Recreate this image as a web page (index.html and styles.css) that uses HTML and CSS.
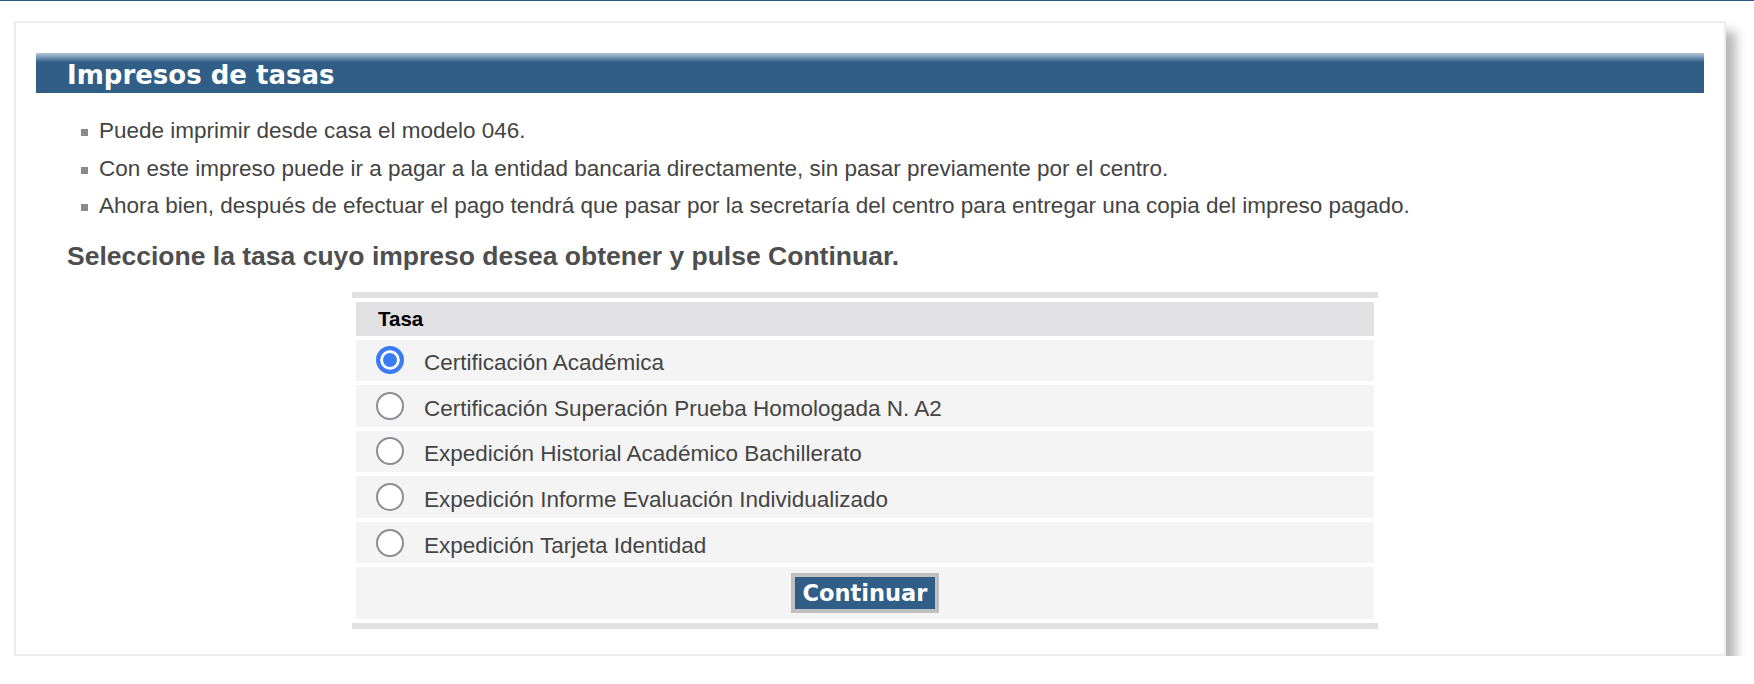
FILE: index.html
```html
<!DOCTYPE html>
<html lang="es">
<head>
<meta charset="utf-8">
<title>Impresos de tasas</title>
<link rel="stylesheet" href="styles.css">
</head>
<body>
<div class="topline"></div>
<div class="card">
  <h2 class="bar">Impresos de tasas</h2>
  <ul class="notes">
    <li>Puede imprimir desde casa el modelo 046.</li>
    <li>Con este impreso puede ir a pagar a la entidad bancaria directamente, sin pasar previamente por el centro.</li>
    <li>Ahora bien, después de efectuar el pago tendrá que pasar por la secretaría del centro para entregar una copia del impreso pagado.</li>
  </ul>
  <h3 class="prompt">Seleccione la tasa cuyo impreso desea obtener y pulse Continuar.</h3>
  <form class="form">
    <table class="tasas">
      <thead>
        <tr><th>Tasa</th></tr>
      </thead>
      <tbody>
        <tr><td><label class="opt"><input type="radio" name="tasa" checked><span>Certificación Académica</span></label></td></tr>
        <tr><td><label class="opt"><input type="radio" name="tasa"><span>Certificación Superación Prueba Homologada N. A2</span></label></td></tr>
        <tr><td><label class="opt"><input type="radio" name="tasa"><span>Expedición Historial Académico Bachillerato</span></label></td></tr>
        <tr><td><label class="opt"><input type="radio" name="tasa"><span>Expedición Informe Evaluación Individualizado</span></label></td></tr>
        <tr><td><label class="opt"><input type="radio" name="tasa"><span>Expedición Tarjeta Identidad</span></label></td></tr>
        <tr><td class="actions"><button type="button" class="btn">Continuar</button></td></tr>
      </tbody>
    </table>
  </form>
</div>
</body>
</html>
```

FILE: styles.css
```css
html, body {
  margin: 0;
  padding: 0;
  background: #ffffff;
}

body {
  font-family: "Liberation Sans", Arial, Helvetica, sans-serif;
  color: #444444;
}

.topline {
  height: 1px;
  background: #2d5b85;
}

.card {
  margin: 20px 28px 0 14px;
  border: 2px solid #ececec;
  background: #ffffff;
  padding: 30px 20px 25px 20px;
  box-shadow: 10px 10px 10px rgba(0, 0, 0, 0.28);
}

.bar {
  margin: 0;
  height: 40px;
  box-sizing: border-box;
  padding: 6px 0 0 31px;
  font-family: "DejaVu Sans", Verdana, sans-serif;
  font-weight: bold;
  font-size: 26px;
  line-height: 32px;
  color: #ffffff;
  background: linear-gradient(to bottom, #b2c7da 0px, #7d9dbb 4px, #3e6a91 8px, #315e87 10px, #315e87 100%);
}

.notes {
  list-style: none;
  margin: 19px 0 0 0;
  padding: 0 0 0 45px;
}

.notes li {
  font-size: 22.5px;
  line-height: 37.5px;
  color: #444444;
  display: flex;
  align-items: center;
}

.notes li::before {
  content: "";
  width: 7px;
  height: 7px;
  background: #8a8a8a;
  margin: 4px 11px 0 0;
  flex: none;
}

.prompt {
  margin: 15px 0 0 31px;
  font-size: 26.5px;
  line-height: 32px;
  font-weight: bold;
  color: #4e4e4e;
}

.form {
  margin: 20px 0 0 316px;
}

.tasas {
  width: 1026px;
  border-collapse: separate;
  border-spacing: 4px;
  border-top: 6px solid #e1e1e3;
  border-bottom: 6px solid #e1e1e3;
}

.tasas th {
  height: 34px;
  padding: 0 0 0 22px;
  background: #e1e1e3;
  text-align: left;
  font-size: 20.5px;
  font-weight: bold;
  color: #000000;
}

.tasas td {
  height: 41.6px;
  padding: 0 0 0 20px;
  background: #f4f4f4;
}

.tasas td.actions {
  height: 52px;
  padding: 0;
  text-align: center;
}

.opt {
  display: flex;
  align-items: center;
  gap: 20px;
  font-size: 22.5px;
  color: #444444;
}

.opt span {
  padding-top: 6px;
}

.opt input {
  appearance: none;
  -webkit-appearance: none;
  margin: 0;
  width: 28px;
  height: 28px;
  box-sizing: border-box;
  border-radius: 50%;
  border: 2px solid #8d8d92;
  background: #ffffff;
  flex: none;
}

.opt input:checked {
  border: 4px solid #3b7cf5;
  background: #3b7cf5;
  box-shadow: inset 0 0 0 3px #ffffff;
}

.btn {
  width: 148px;
  height: 40px;
  box-sizing: border-box;
  border: 4px solid #c0c0c0;
  background: #315e87;
  color: #ffffff;
  font-family: "DejaVu Sans", Verdana, sans-serif;
  font-weight: bold;
  font-size: 22.5px;
  line-height: 30px;
  padding: 0;
  margin: 0;
  vertical-align: middle;
}
```
